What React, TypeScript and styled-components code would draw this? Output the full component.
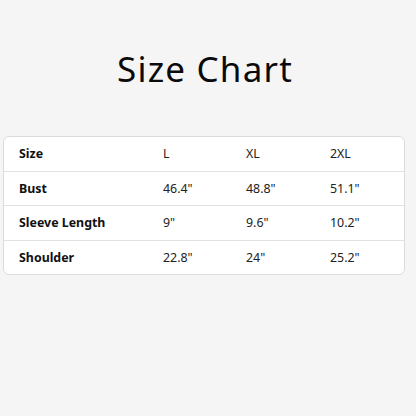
import * as React from "react";
import styled, { createGlobalStyle } from "styled-components";

const rows = [
  { label: "Size", values: ["L", "XL", "2XL"] },
  { label: "Bust", values: ['46.4"', '48.8"', '51.1"'] },
  { label: "Sleeve Length", values: ['9"', '9.6"', '10.2"'] },
  { label: "Shoulder", values: ['22.8"', '24"', '25.2"'] },
];

export default function App() {
  return (
    <>
      <GlobalStyle />
      <Page>
        <Title>Size Chart</Title>
        <Table>
          {rows.map((row) => (
            <Row key={row.label}>
              <Label>{row.label}</Label>
              {row.values.map((v) => (
                <Cell key={v}>{v}</Cell>
              ))}
            </Row>
          ))}
        </Table>
      </Page>
    </>
  );
}

// ----------------------------------------------------------------------------

const GlobalStyle = createGlobalStyle`
  html, body {
    margin: 0;
    padding: 0;
    background: #f5f5f5;
  }
`;

const Page = styled.div`
  width: 416px;
  height: 416px;
  box-sizing: border-box;
  padding: 46px 11px 0 3px;
  display: flex;
  flex-direction: column;
  font-family: "Noto Sans", sans-serif;
  color: #111;
`;

const Title = styled.h1`
  margin: 0 0 44px;
  text-align: center;
  font-family: "Noto Sans", sans-serif;
  font-weight: 400;
  font-size: 35px;
  line-height: 46px;
  letter-spacing: 1.2px;
  color: #0a0a0a;
  padding-left: 2px;
`;

const Table = styled.div`
  background: #fff;
  border: 1px solid #dcdcdc;
  border-radius: 6px;
  display: flex;
  flex-direction: column;
`;

const Row = styled.div`
  display: grid;
  grid-template-columns: 144px 83px 84px 1fr;
  height: 33.5px;
  align-items: center;
  padding-left: 15px;
  font-size: 12.4px;

  & + & {
    border-top: 1px solid #e2e2e2;
  }
`;

const Label = styled.div`
  font-weight: 700;
  color: #111;
`;

const Cell = styled.div`
  font-weight: 400;
  color: #222;
`;
